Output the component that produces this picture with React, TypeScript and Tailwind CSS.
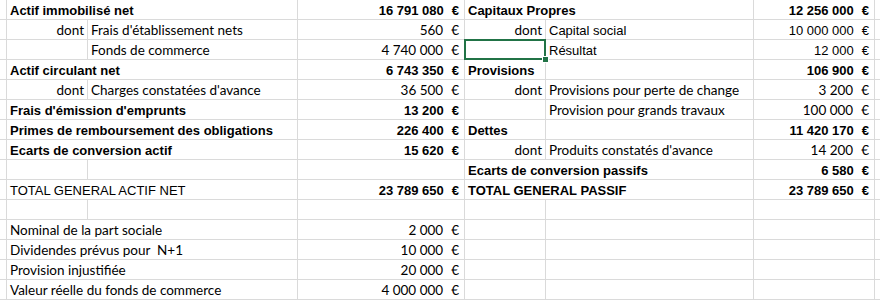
import React from 'react';

type Font = 'arial' | 'calibri';

interface CellProps {
    text?: string;
    bold?: boolean;
    font?: Font;
    right?: boolean;
    span?: 1 | 2;
    selected?: boolean;
    amount?: boolean;
}

const fontClass = {
    arial: "font-['Liberation_Sans',Arial,sans-serif] text-[13px]",
    calibri: "font-['Lato','Liberation_Sans',sans-serif] text-[13.5px]",
};

function Cell({ text, bold, font = 'arial', right, span = 1, selected, amount }: CellProps) {
    const base = `relative h-5 border-b border-r border-[#dadada] flex items-end pb-[2px] whitespace-pre text-black leading-none ${fontClass[font]} ${bold ? 'font-bold' : ''} ${span === 2 ? 'col-span-2' : ''} ${selected ? 'z-10 overflow-visible' : 'overflow-hidden'}`;

    if (amount && text) {
        return (
            <div className={`${base} justify-end pr-[5px]`}>
                <span>{text}</span>
                <span className="ml-[8px]">€</span>
            </div>
        );
    }

    return (
        <div className={`${base} ${right ? 'justify-end pr-[3px]' : 'pl-[3px]'}`}>
            {text && <span>{text}</span>}
            {selected && (
                <>
                    <div className="absolute left-[-1px] top-[-1px] w-[82px] h-[21px] border-2 border-[#217346]" />
                    <div className="absolute right-[-4px] bottom-[-4px] w-[7px] h-[7px] bg-[#217346] border border-white" />
                </>
            )}
        </div>
    );
}

function Edge() {
    return <div className="h-5 border-b border-r border-[#dadada]" />;
}

function EdgeEnd() {
    return <div className="h-5 border-b border-[#dadada]" />;
}

export default function App() {
    return (
        <div className="w-[880px] h-[300px] bg-white overflow-hidden">
            <div className="grid grid-cols-[7px_81px_210px_167px_81px_208px_121px_5px]">
                {/* 1 */}
                <Edge />
                <Cell text="Actif immobilisé net" bold span={2} />
                <Cell text="16 791 080" bold amount />
                <Cell text="Capitaux Propres" bold span={2} />
                <Cell text="12 256 000" bold amount />
                <EdgeEnd />

                {/* 2 */}
                <Edge />
                <Cell text="dont" font="calibri" right />
                <Cell text="Frais d'établissement nets" font="calibri" />
                <Cell text="560" font="calibri" amount />
                <Cell text="dont" font="calibri" right />
                <Cell text="Capital social" />
                <Cell text="10 000 000" amount />
                <EdgeEnd />

                {/* 3 */}
                <Edge />
                <Cell />
                <Cell text="Fonds de commerce" font="calibri" />
                <Cell text="4 740 000" font="calibri" amount />
                <Cell selected />
                <Cell text="Résultat" />
                <Cell text="12 000" amount />
                <EdgeEnd />

                {/* 4 */}
                <Edge />
                <Cell text="Actif circulant net" bold span={2} />
                <Cell text="6 743 350" bold amount />
                <Cell text="Provisions" bold />
                <Cell />
                <Cell text="106 900" bold amount />
                <EdgeEnd />

                {/* 5 */}
                <Edge />
                <Cell text="dont" font="calibri" right />
                <Cell text="Charges constatées d'avance" font="calibri" />
                <Cell text="36 500" font="calibri" amount />
                <Cell text="dont" font="calibri" right />
                <Cell text="Provisions pour perte de change" font="calibri" />
                <Cell text="3 200" font="calibri" amount />
                <EdgeEnd />

                {/* 6 */}
                <Edge />
                <Cell text="Frais d'émission d'emprunts" bold span={2} />
                <Cell text="13 200" bold amount />
                <Cell />
                <Cell text="Provision pour grands travaux" font="calibri" />
                <Cell text="100 000" font="calibri" amount />
                <EdgeEnd />

                {/* 7 */}
                <Edge />
                <Cell text="Primes de remboursement des obligations" bold span={2} />
                <Cell text="226 400" bold amount />
                <Cell text="Dettes" bold />
                <Cell />
                <Cell text="11 420 170" bold amount />
                <EdgeEnd />

                {/* 8 */}
                <Edge />
                <Cell text="Ecarts de conversion actif" bold span={2} />
                <Cell text="15 620" bold amount />
                <Cell text="dont" font="calibri" right />
                <Cell text="Produits constatés d'avance" font="calibri" />
                <Cell text="14 200" font="calibri" amount />
                <EdgeEnd />

                {/* 9 */}
                <Edge />
                <Cell />
                <Cell />
                <Cell />
                <Cell text="Ecarts de conversion passifs" bold span={2} />
                <Cell text="6 580" bold amount />
                <EdgeEnd />

                {/* 10 */}
                <Edge />
                <Cell text="TOTAL GENERAL ACTIF NET" span={2} />
                <Cell text="23 789 650" bold amount />
                <Cell text="TOTAL GENERAL PASSIF" bold span={2} />
                <Cell text="23 789 650" bold amount />
                <EdgeEnd />

                {/* 11 */}
                <Edge />
                <Cell />
                <Cell />
                <Cell />
                <Cell />
                <Cell />
                <Cell />
                <EdgeEnd />

                {/* 12-15 */}
                {[
                    ['Nominal de la part sociale', '2 000'],
                    ['Dividendes prévus pour  N+1', '10 000'],
                    ['Provision injustifiée', '20 000'],
                    ['Valeur réelle du fonds de commerce', '4 000 000'],
                ].map(([label, value]) => (
                    <React.Fragment key={label}>
                        <Edge />
                        <Cell text={label} font="calibri" span={2} />
                        <Cell text={value} font="calibri" amount />
                        <Cell />
                        <Cell />
                        <Cell />
                        <EdgeEnd />
                    </React.Fragment>
                ))}
            </div>
        </div>
    );
}
